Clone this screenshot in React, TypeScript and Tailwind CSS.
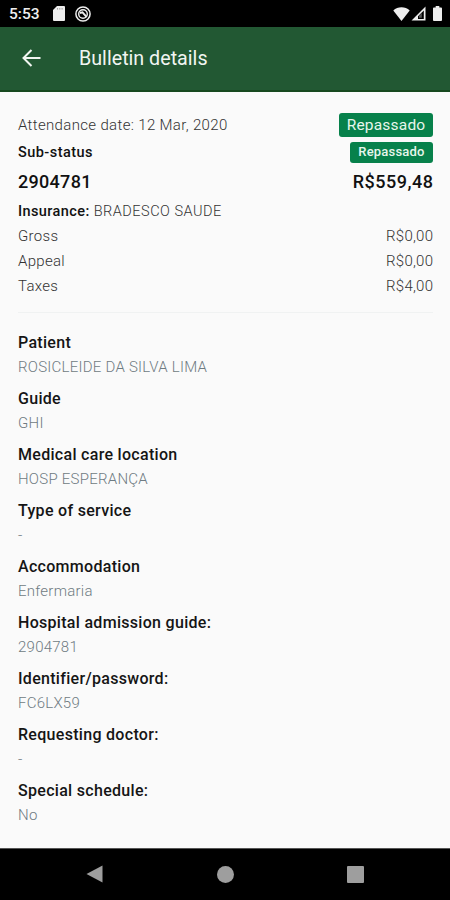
import type { ReactNode } from 'react'

const AMOUNTS = [
  { label: 'Gross', value: 'R$0,00' },
  { label: 'Appeal', value: 'R$0,00' },
  { label: 'Taxes', value: 'R$4,00' },
]

const DETAILS = [
  { label: 'Patient', value: 'ROSICLEIDE DA SILVA LIMA' },
  { label: 'Guide', value: 'GHI' },
  { label: 'Medical care location', value: 'HOSP ESPERANÇA' },
  { label: 'Type of service', value: '-' },
  { label: 'Accommodation', value: 'Enfermaria' },
  { label: 'Hospital admission guide:', value: '2904781' },
  { label: 'Identifier/password:', value: 'FC6LX59' },
  { label: 'Requesting doctor:', value: '-' },
  { label: 'Special schedule:', value: 'No' },
]

function StatusBar() {
  return (
    <div className="flex h-[27px] items-center bg-black pl-[9px] pr-2 text-[#eeeeee]">
      <span className="w-[44px] pt-0.5 text-[15.5px] font-medium leading-[25px]">5:53</span>
      <svg className="h-[15px] w-3" viewBox="0 0 12 15" fill="currentColor">
        <path d="M4 0h7a1 1 0 0 1 1 1v13a1 1 0 0 1-1 1H1a1 1 0 0 1-1-1V4z" />
        <path d="M4.500 2v1.600M6.800 2v1.600M9.100 2v1.600" stroke="#999999" strokeWidth="0.900" />
      </svg>
      <svg className="ml-2.5 h-4 w-4" viewBox="0 0 16 16" fill="none" stroke="currentColor">
        <circle cx="8" cy="8" r="7.100" strokeWidth="1.500" />
        <circle cx="8" cy="8" r="4.300" strokeWidth="1.400" />
        <path d="M5 7l2.500-.7 4 4.500" strokeWidth="1.900" />
      </svg>
      <div className="ml-auto flex items-center">
        <svg className="h-[14px] w-[17px]" viewBox="0 0 17 14" fill="currentColor">
          <path d="M8.500 14L.3 3.600C2.500 1.400 5.500.3 8.500.3s6 1.100 8.200 3.300z" />
        </svg>
        <svg className="ml-px h-[15px] w-[15px]" viewBox="0 0 15 15" fill="currentColor">
          <path d="M14.500.5v14H.5zM12.800 4.500L7 10.300V13h5.800z" fillRule="evenodd" />
          <path d="M8 11.800V9.800L10.800 7v4.800z" fill="#555555" />
        </svg>
        <svg className="ml-[7px] h-[15px] w-[9px]" viewBox="0 0 10 15" preserveAspectRatio="none" fill="currentColor">
          <path d="M3 0h4v1.500h2a1 1 0 0 1 1 1V14a1 1 0 0 1-1 1H1a1 1 0 0 1-1-1V2.500a1 1 0 0 1 1-1h2z" />
        </svg>
      </div>
    </div>
  )
}

function Header() {
  return (
    <header className="flex h-[65px] items-center border-b-2 border-[#17491f] bg-[#225833] pb-0.5 pl-[22px] text-[#f1f5f1]">
      <button type="button" aria-label="Back">
        <svg className="h-[18px] w-[19px]" viewBox="0 0 19 18" fill="none" stroke="currentColor" strokeWidth="2">
          <path d="M18.500 9H2M9.500 1L1.500 9l8 8" />
        </svg>
      </button>
      <h1 className="ml-[38px] pt-0.5 text-[19.7px] leading-6">Bulletin details</h1>
    </header>
  )
}

function Badge({ className, children }: { className: string; children: ReactNode }) {
  return (
    <span className={`flex items-center justify-center rounded-[3px] bg-[#07814b] text-[#e8f6ec] ${className}`}>
      {children}
    </span>
  )
}

function NavBar() {
  return (
    <nav className="flex h-[52px] items-center justify-between border-t border-[#555555] bg-black px-[86px] pb-px text-[#9e9e9e]">
      <svg className="h-[18px] w-[17px]" viewBox="0 0 17 18" fill="currentColor">
        <path d="M16.500.5v17L.5 9z" />
      </svg>
      <span className="h-[17px] w-[17px] rounded-full bg-current" />
      <span className="h-[17px] w-[17px] rounded-[1px] bg-current" />
    </nav>
  )
}

function App() {
  return (
    <div className="flex h-[900px] w-[450px] flex-col overflow-hidden bg-[#fafafa] font-['Roboto',sans-serif]">
      <StatusBar />
      <Header />

      <main className="flex-1 pl-[18px] pr-[17px] pt-[21px] text-[15px]">
        <div className="flex h-6 items-center justify-between">
          <span className="font-light tracking-[0.34px] text-[#333333]">Attendance date: 12 Mar, 2020</span>
          <Badge className="h-6 w-[94px] pt-px text-[15.5px] tracking-[0.2px]">Repassado</Badge>
        </div>
        <div className="mt-[5px] flex h-5 items-center justify-between">
          <span className="pt-0.5 text-[14.5px] font-medium tracking-[0.45px] text-[#111111]">Sub-status</span>
          <Badge className="h-[21px] w-[83px] text-[13px] font-medium tracking-[0.2px]">Repassado</Badge>
        </div>
        <div className="mt-[5px] flex h-7 items-center justify-between text-[18px] font-medium text-[#111111]">
          <span className="tracking-[0.3px]">2904781</span>
          <span className="-mr-[0.5px] tracking-[0.5px]">R$559,48</span>
        </div>
        <p className="mt-1 h-[25px] text-[14.5px] font-light leading-[25px] tracking-[0.5px] text-[#333333]">
          <span className="font-medium tracking-[0.4px] text-[#111111]">Insurance:</span> BRADESCO SAUDE
        </p>
        {AMOUNTS.map((amount) => (
          <div key={amount.label} className="flex h-[25px] items-center justify-between font-light text-[#333333]">
            <span className="tracking-[0.3px]">{amount.label}</span>
            <span className="-mr-[0.25px] tracking-[0.25px]">{amount.value}</span>
          </div>
        ))}

        <hr className="mt-[13px] border-t border-[#f0f2f2]" />

        <dl className="mt-[18px] flex flex-col gap-2">
          {DETAILS.map((detail) => (
            <div key={detail.label}>
              <dt className="text-[16px] font-medium leading-6 tracking-[0.3px] text-[#151515]">{detail.label}</dt>
              <dd className="font-light leading-6 tracking-[0.25px] text-[#6f7b82]">{detail.value}</dd>
            </div>
          ))}
        </dl>
      </main>

      <NavBar />
    </div>
  )
}

export default App
